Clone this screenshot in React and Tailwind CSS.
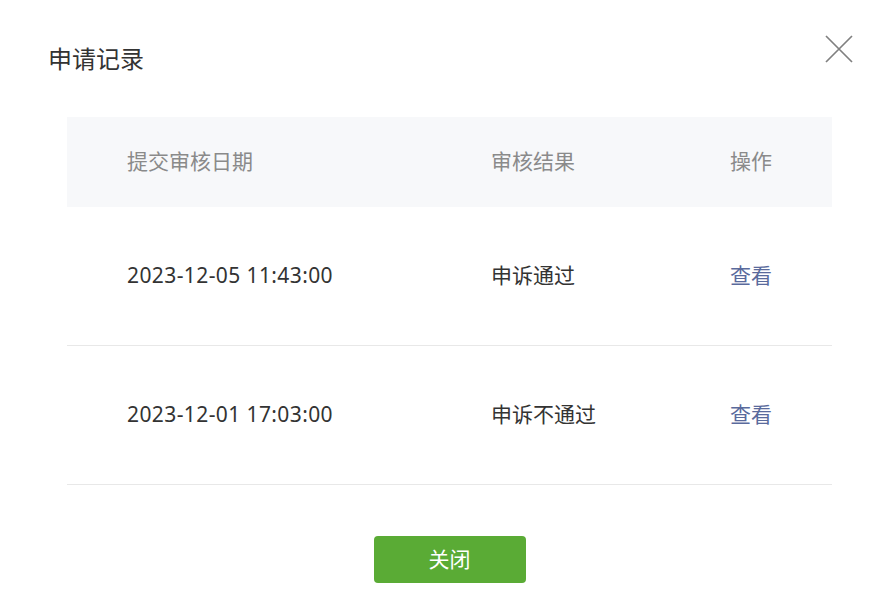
import React from "react";

const rows = [
  { date: "2023-12-05 11:43:00", result: "申诉通过" },
  { date: "2023-12-01 17:03:00", result: "申诉不通过" },
];

export default function App() {
  return (
    <div
      className="w-[889px] h-[613px] bg-white relative overflow-hidden"
      style={{ fontFamily: '"Noto Sans", "Noto Sans CJK SC", sans-serif' }}
    >
      <div className="flex items-start justify-between pl-[48px] pr-[36px] pt-[35px]">
        <div className="mt-[6px] text-[24px] leading-[36px] text-[#333333]">申请记录</div>
        <button className="w-[28px] h-[28px] p-0">
          <svg width="28" height="28" viewBox="0 0 28 28" fill="none">
            <path d="M1 1 L27 27 M27 1 L1 27" stroke="#808080" strokeWidth="1.7" />
          </svg>
        </button>
      </div>

      <div className="ml-[67px] w-[765px] mt-[40px]">
        <div className="grid grid-cols-[365px_238px_162px] h-[90px] items-center bg-[#f7f8fa] text-[21px] text-[#8a8a8a]">
          <div className="pl-[60px]">提交审核日期</div>
          <div className="pl-[59px]">审核结果</div>
          <div className="pl-[60px]">操作</div>
        </div>
        {rows.map((r) => (
          <div
            key={r.date}
            className="grid grid-cols-[365px_238px_162px] h-[139px] items-center border-b border-[#e8e8e8] text-[21px] text-[#333333]"
          >
            <div className="pl-[60px] tracking-[0.4px]">{r.date}</div>
            <div className="pl-[59px]">{r.result}</div>
            <div className="pl-[60px] text-[#5a6a9c]">查看</div>
          </div>
        ))}
        <div className="flex justify-center mt-[51px]">
          <button className="w-[152px] h-[47px] rounded-[4px] bg-[#5aab35] text-white text-[21px]">关闭</button>
        </div>
      </div>
    </div>
  );
}
